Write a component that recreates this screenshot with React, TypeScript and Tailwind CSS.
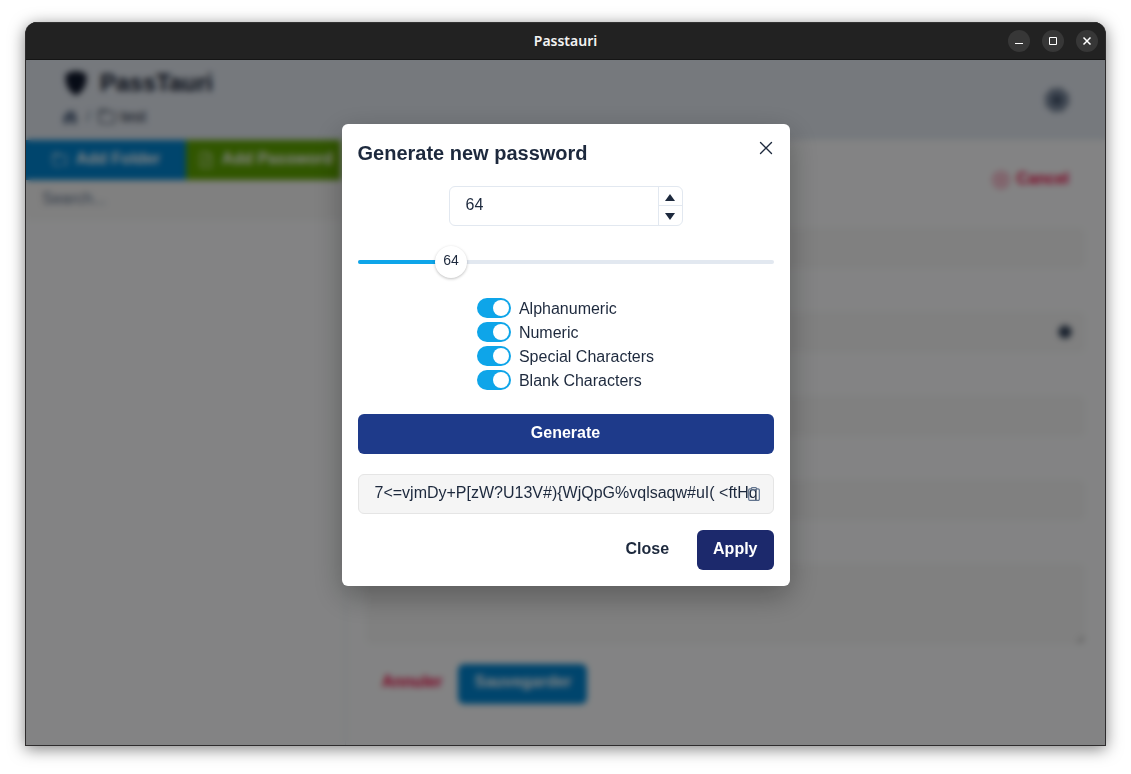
import { useState, type ReactNode } from "react";
import {
  BsShieldFill,
  BsHouseDoorFill,
  BsFolder,
  BsFolderPlus,
  BsFileEarmarkPlus,
  BsXCircle,
} from "react-icons/bs";

const MIN = 1;
const MAX = 281;

function WindowButton({ label, children }: { label: string; children: ReactNode }) {
  return (
    <button aria-label={label} className="flex size-[22px] items-center justify-center rounded-full bg-[#373737] text-white">
      <svg viewBox="0 0 22 22" className="size-[22px]" fill="none" stroke="currentColor" aria-hidden="true">
        {children}
      </svg>
    </button>
  );
}

function TitleBar() {
  return (
    <header className="grid h-[38px] shrink-0 grid-cols-[1fr_auto_1fr] items-center border-t border-b border-t-[#333333] border-b-[#151515] bg-[#222222] px-[7px]">
      <span />
      <h1 className="font-['Noto_Sans',sans-serif] text-sm leading-5 font-semibold text-[#f2f2f2]">Passtauri</h1>
      <div className="flex justify-end gap-3">
        <WindowButton label="Minimize">
          <path d="M7 13.5h8" />
        </WindowButton>
        <WindowButton label="Maximize">
          <path d="M7.5 7.5h7v7h-7z" />
        </WindowButton>
        <WindowButton label="Close window">
          <path d="M7.5 7.5l7 7M14.5 7.5l-7 7" strokeWidth="1.5" />
        </WindowButton>
      </div>
    </header>
  );
}

function AppHeader() {
  return (
    <div className="flex h-20 shrink-0 items-center justify-between bg-slate-200 px-9">
      <div className="flex flex-col gap-1.5 pb-1">
        <div className="flex items-center gap-3 text-slate-900">
          <BsShieldFill className="ml-0.5 size-6" />
          <span className="text-2xl leading-8 font-bold">PassTauri</span>
        </div>
        <nav aria-label="Breadcrumb" className="flex items-center gap-2 text-slate-800">
          <BsHouseDoorFill className="size-4 text-slate-500" />
          <span className="text-slate-500">/</span>
          <a href="#test" className="flex items-center gap-1">
            <BsFolder className="size-[18px]" />
            test
          </a>
        </nav>
      </div>
      <button aria-label="Settings" className="text-slate-600">
        <svg viewBox="0 0 24 24" className="size-6" aria-hidden="true">
          <circle cx="12" cy="12" r="10.5" fill="#94a3b8" stroke="currentColor" strokeWidth="3" strokeDasharray="6 2.25" />
          <circle cx="12" cy="12" r="6" fill="currentColor" />
        </svg>
      </button>
    </div>
  );
}

function Sidebar() {
  return (
    <aside className="flex w-80 shrink-0 flex-col border-r border-slate-200 pr-1">
      <div className="flex h-10">
        <button className="flex w-40 items-center justify-center gap-2 bg-sky-600 font-bold whitespace-nowrap text-white">
          <BsFolderPlus className="size-4" />
          <span className="pb-0.5">Add Folder</span>
        </button>
        <button className="flex flex-1 items-center justify-end gap-2 bg-lime-600 px-2 font-bold whitespace-nowrap text-white">
          <BsFileEarmarkPlus className="size-4" />
          <span className="pb-0.5">Add Password</span>
        </button>
      </div>
      <input aria-label="Search" placeholder="Search..." className="h-10 bg-neutral-100 px-4 pb-0.5 placeholder:text-slate-500" />
    </aside>
  );
}

function EntryForm() {
  return (
    <main className="flex flex-1 flex-col px-5 pt-5">
      <div className="flex h-10 items-center justify-end pr-4 font-bold text-rose-600">
        <button className="flex items-center gap-2">
          <BsXCircle className="size-4" />
          <span className="pb-0.5">Cancel</span>
        </button>
      </div>
      <div className="flex flex-col gap-11 pt-7">
        <input aria-label="Name" className="h-10 rounded-md bg-neutral-100" />
        <div className="flex h-10 items-center rounded-md bg-neutral-100 pr-3">
          <input aria-label="Password" className="min-w-0 flex-1" />
          <svg viewBox="0 0 16 16" className="size-4 text-slate-700" aria-hidden="true">
            <circle cx="8" cy="8" r="6" fill="currentColor" stroke="currentColor" strokeWidth="2" strokeDasharray="2.4 2.3" />
          </svg>
        </div>
        <input aria-label="User name" className="h-10 rounded-md bg-neutral-100" />
        <input aria-label="Address" className="h-10 rounded-md bg-neutral-100" />
        <textarea aria-label="Notes" className="h-20 rounded-md bg-neutral-100" />
      </div>
      <div className="flex pt-5">
        <button className="h-10 px-4 pb-1 font-bold text-rose-600">Annuler</button>
        <button className="h-10 rounded-md bg-sky-600 px-4 pb-1 font-bold text-white">Sauvegarder</button>
      </div>
    </main>
  );
}

function Toggle({ label }: { label: string }) {
  const [on, setOn] = useState(true);
  return (
    <label className="flex h-6 items-center gap-2">
      <input type="checkbox" role="switch" checked={on} onChange={() => setOn(!on)} className="peer sr-only" />
      <span className="flex h-5 w-[34px] items-center rounded-full bg-slate-300 px-0.5 peer-checked:justify-end peer-checked:bg-[#0ea5e9]">
        <span className="size-4 rounded-full bg-white" />
      </span>
      <span className="pt-0.5">{label}</span>
    </label>
  );
}

function GenerateDialog() {
  const [length, setLength] = useState(64);
  const clamp = (n: number) => Math.min(MAX, Math.max(MIN, n));
  const share = `${((length - MIN) / (MAX - MIN)) * 100}%`;
  return (
    <section role="dialog" aria-modal="true" aria-labelledby="dialog-title" className="flex w-full max-w-md flex-col rounded-md bg-white px-4 pb-4 shadow-[0_10px_30px_rgba(0,0,0,0.3)]">
      <div className="flex h-[62px] items-start justify-between pt-3">
        <h2 id="dialog-title" className="text-xl leading-[34px] font-bold">Generate new password</h2>
        <button aria-label="Close dialog" className="mt-1 flex size-4 items-center justify-center">
          <svg viewBox="0 0 16 16" className="size-4" fill="none" stroke="currentColor" strokeWidth="1.4" strokeLinecap="round" aria-hidden="true">
            <path d="M2.5 2.5l11 11M13.5 2.5l-11 11" />
          </svg>
        </button>
      </div>
      <div className="flex h-10 w-[234px] self-center overflow-hidden rounded-md border border-slate-200">
        <input aria-label="Password length" inputMode="numeric" value={length} onChange={(e) => setLength(clamp(Number(e.target.value) || MIN))} className="min-w-0 flex-1 px-4 pb-0.5 outline-none" />
        <div className="flex w-6 flex-col divide-y divide-slate-200 border-l border-slate-200">
          <button aria-label="Increase" onClick={() => setLength(clamp(length + 1))} className="flex h-[19px] items-center justify-center pt-0.5">
            <svg viewBox="0 0 10 7" className="h-[7px] w-2.5" fill="currentColor" aria-hidden="true"><path d="M5 0l5 7H0z" /></svg>
          </button>
          <button aria-label="Decrease" onClick={() => setLength(clamp(length - 1))} className="flex h-[19px] items-center justify-center pt-0.5">
            <svg viewBox="0 0 10 7" className="h-[7px] w-2.5" fill="currentColor" aria-hidden="true"><path d="M5 7l5-7H0z" /></svg>
          </button>
        </div>
      </div>
      <div className="relative mt-5 flex h-8 items-center">
        <div className="h-1 w-full overflow-hidden rounded-full bg-slate-200">
          <div className="h-full bg-[#0ea5e9]" style={{ width: share }} />
        </div>
        <span className="absolute flex size-8 -translate-x-1/2 items-center justify-center rounded-full bg-white pb-1 text-sm shadow-[0_1px_3px_rgba(0,0,0,0.25)]" style={{ left: share }}>
          {length}
        </span>
        <input type="range" aria-label="Length" min={MIN} max={MAX} value={length} onChange={(e) => setLength(Number(e.target.value))} className="absolute inset-0 opacity-0" />
      </div>
      <div className="mt-[18px] flex flex-col self-center">
        <Toggle label="Alphanumeric" />
        <Toggle label="Numeric" />
        <Toggle label="Special Characters" />
        <Toggle label="Blank Characters" />
      </div>
      <button className="mt-[22px] h-10 rounded-md bg-[#1e3a8a] pb-0.5 font-bold text-white">Generate</button>
      <div className="mt-5 flex h-10 items-center rounded-md border border-neutral-200 bg-neutral-100 pr-[13px] pl-4">
        <input aria-label="Generated password" readOnly value="7<=vjmDy+P[zW?U13V#){WjQpG%vqlsaqw#uI( <ftHq8]kR" className="-mr-[10px] h-full min-w-0 flex-1 pb-0.5 outline-none" />
        <button aria-label="Copy password" className="text-slate-500">
          <svg viewBox="0 0 12 14" className="h-3.5 w-3" fill="none" stroke="currentColor" strokeWidth="1.2" strokeLinejoin="round" aria-hidden="true">
            <path d="M3.5 1.8H1.9A1.2 1.2 0 0 0 .7 3v9.200a1.200 1.200 0 0 0 1.200 1.200h8.200a1.200 1.200 0 0 0 1.200-1.200V3a1.200 1.200 0 0 0-1.200-1.200H8.500" />
            <path d="M4.300.6h3.400a.8.8 0 0 1 .8.8v1.400h-5V1.400a.8.8 0 0 1 .8-.8z" />
          </svg>
        </button>
      </div>
      <div className="mt-4 flex justify-end gap-3">
        <button className="h-10 rounded-md px-4 pb-0.5 font-bold">Close</button>
        <button className="h-10 rounded-md bg-[#1c296c] px-4 pb-0.5 font-bold text-white">Apply</button>
      </div>
    </section>
  );
}

export default function App() {
  return (
    <div className="flex h-screen bg-white px-[25px] pt-[22px] pb-7 font-['Liberation_Sans',Arial,sans-serif] text-base text-slate-800">
      <div className="flex min-w-0 flex-1 flex-col overflow-hidden rounded-t-xl border-x border-b border-[#2e2c2d] bg-[#222222] shadow-[0_3px_16px_rgba(0,0,0,0.5)]">
        <TitleBar />
        <div className="relative flex min-h-0 flex-1 flex-col overflow-hidden bg-[#fbfcfd]">
          <AppHeader />
          <div className="flex min-h-0 flex-1">
            <Sidebar />
            <EntryForm />
          </div>
          <div className="absolute inset-0 flex items-start justify-center bg-black/48 pt-16 backdrop-blur-[3px]">
            <GenerateDialog />
          </div>
        </div>
      </div>
    </div>
  );
}
